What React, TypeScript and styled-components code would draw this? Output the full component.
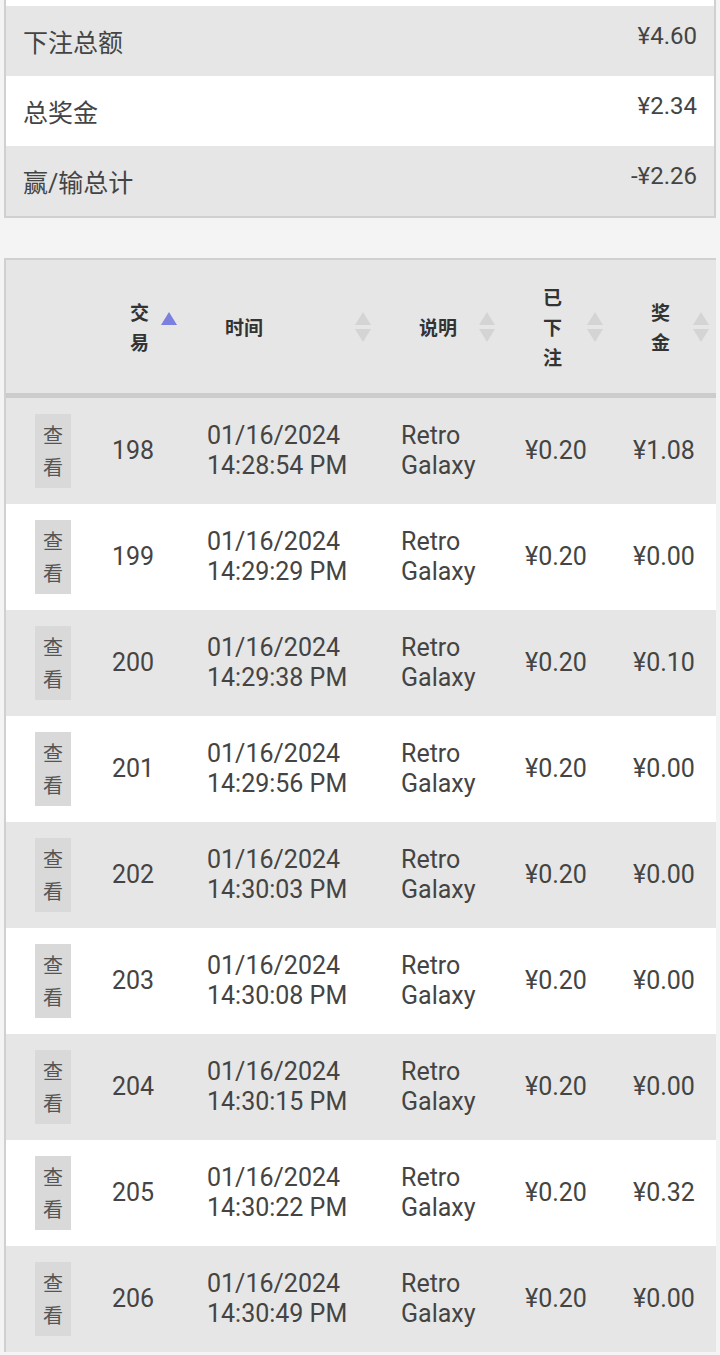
import styled, { createGlobalStyle } from "styled-components";

const GlobalStyle = createGlobalStyle`
  body {
    margin: 0;
    background: #f4f4f4;
    font-family: Roboto, "Noto Sans CJK SC", sans-serif;
    color: #444;
  }
`;

const Page = styled.div`
  display: flex;
  flex-direction: column;
  gap: 40px;
  padding-left: 4px;
`;

const Summary = styled.div`
  width: 708px;
  background: #fff;
  border: 2px solid #d0d0d0;
  border-top: none;
  padding-top: 6px;
`;

const SummaryRow = styled.div<{ $shade: boolean }>`
  height: 70px;
  display: flex;
  align-items: center;
  justify-content: space-between;
  padding: 0 17px;
  background: ${(p) => (p.$shade ? "#e6e6e6" : "#fff")};
  font-size: 24px;
`;

const SummaryLabel = styled.span`
  font-size: 25px;
`;

const SummaryValue = styled.span`
  margin-bottom: 10px;
`;

const TableBox = styled.div`
  width: 710px;
  border-top: 2px solid #d0d0d0;
  border-left: 2px solid #d0d0d0;
  overflow: hidden;
`;

const Table = styled.table`
  width: 721px;
  table-layout: fixed;
  border-collapse: collapse;
`;

const Th = styled.th`
  position: relative;
  height: 133px;
  padding: 0 30px;
  background: #e6e6e6;
  border-bottom: 5px solid #cccccc;
  text-align: left;
  vertical-align: middle;
  font-family: "Noto Sans CJK SC", sans-serif;
  font-size: 19px;
  font-weight: 600;
  line-height: 30px;
  color: #333;
`;

const SortMark = styled.svg`
  position: absolute;
  right: 18px;
  top: 50%;
  margin-top: -15px;
`;

const Row = styled.tr<{ $shade: boolean }>`
  background: ${(p) => (p.$shade ? "#e6e6e6" : "#fff")};
`;

const Td = styled.td`
  height: 106px;
  padding: 0 12px;
  vertical-align: middle;
  font-size: 25px;
  line-height: 30px;
  color: #444;
`;

const ViewCell = styled.td`
  height: 106px;
  padding: 0;
  vertical-align: middle;
`;

const ViewButton = styled.div`
  width: 20px;
  margin: 0 auto;
  padding: 5px 8px;
  background: #d9d9d9;
  font-family: "Noto Sans CJK SC", sans-serif;
  font-size: 20px;
  line-height: 32px;
  color: #555;
  text-align: center;
`;

function Sort({ active }: { active?: boolean }) {
  return (
    <SortMark width="16" height="30" viewBox="0 0 16 30">
      <polygon points="8,0 16,13 0,13" fill={active ? "#7b7fe0" : "#d4d4d4"} />
      {!active && <polygon points="0,17 16,17 8,30" fill="#d4d4d4" />}
    </SortMark>
  );
}

const summary = [
  { label: "下注总额", value: "¥4.60" },
  { label: "总奖金", value: "¥2.34" },
  { label: "赢/输总计", value: "-¥2.26" },
];

const headers = [
  { label: ["交", "易"], active: true },
  { label: ["时间"] },
  { label: ["说明"] },
  { label: ["已", "下", "注"] },
  { label: ["奖", "金"] },
];

const rows = [
  { id: 198, time: "14:28:54 PM", win: "¥1.08" },
  { id: 199, time: "14:29:29 PM", win: "¥0.00" },
  { id: 200, time: "14:29:38 PM", win: "¥0.10" },
  { id: 201, time: "14:29:56 PM", win: "¥0.00" },
  { id: 202, time: "14:30:03 PM", win: "¥0.00" },
  { id: 203, time: "14:30:08 PM", win: "¥0.00" },
  { id: 204, time: "14:30:15 PM", win: "¥0.00" },
  { id: 205, time: "14:30:22 PM", win: "¥0.32" },
  { id: 206, time: "14:30:49 PM", win: "¥0.00" },
];

export default function App() {
  return (
    <>
      <GlobalStyle />
      <Page>
        <Summary>
          {summary.map((s, i) => (
            <SummaryRow key={s.label} $shade={i % 2 === 0}>
              <SummaryLabel>{s.label}</SummaryLabel>
              <SummaryValue>{s.value}</SummaryValue>
            </SummaryRow>
          ))}
        </Summary>
        <TableBox>
          <Table>
            <colgroup>
              <col style={{ width: 94 }} />
              <col style={{ width: 95 }} />
              <col style={{ width: 194 }} />
              <col style={{ width: 124 }} />
              <col style={{ width: 108 }} />
              <col style={{ width: 106 }} />
            </colgroup>
            <thead>
              <tr>
                <Th />
                {headers.map((h, i) => (
                  <Th key={i}>
                    {h.label.map((part, j) => (
                      <div key={j}>{part}</div>
                    ))}
                    <Sort active={h.active} />
                  </Th>
                ))}
              </tr>
            </thead>
            <tbody>
              {rows.map((r, i) => (
                <Row key={r.id} $shade={i % 2 === 0}>
                  <ViewCell>
                    <ViewButton>
                      查
                      <br />看
                    </ViewButton>
                  </ViewCell>
                  <Td>{r.id}</Td>
                  <Td>
                    01/16/2024
                    <br />
                    {r.time}
                  </Td>
                  <Td>Retro Galaxy</Td>
                  <Td>¥0.20</Td>
                  <Td>{r.win}</Td>
                </Row>
              ))}
            </tbody>
          </Table>
        </TableBox>
      </Page>
    </>
  );
}
